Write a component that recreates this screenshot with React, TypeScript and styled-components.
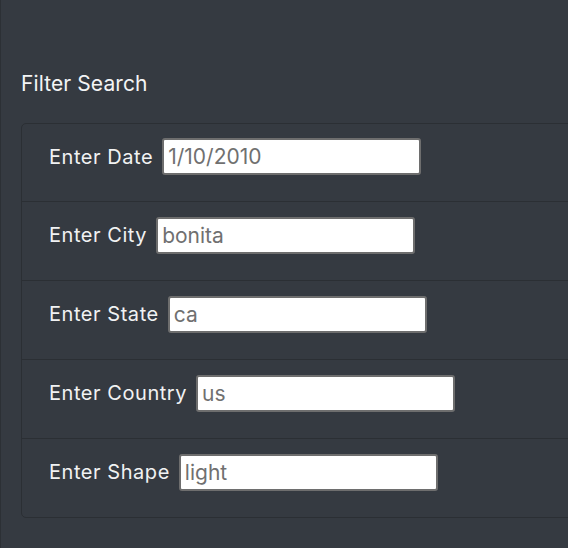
import React from "react";
import styled, { createGlobalStyle } from "styled-components";

const GlobalStyle = createGlobalStyle`
    html, body {
        margin: 0;
        padding: 0;
        background: #353a41;
    }
    body {
        font-family: Inter, "Open Sans", "Liberation Sans", sans-serif;
    }
`;

// Styled components
const Page = styled.div`
    min-height: 548px;
    box-sizing: border-box;
    border-left: 1px solid #2c3035;
    padding: 72px 0 0 20px;
    background: #353a41;
    overflow: hidden;
`;

const Title = styled.h5`
    margin: 0 0 27px;
    font-size: 21px;
    font-weight: 400;
    line-height: 24px;
    letter-spacing: 0.1px;
    color: #f3f4f5;
`;

const List = styled.ul`
    margin: 0;
    padding: 0;
    list-style: none;
    width: 700px;
    border: 1px solid #2b2f34;
    border-radius: 5px;
`;

const Item = styled.li`
    display: flex;
    align-items: center;
    gap: 9px;
    height: 79px;
    box-sizing: border-box;
    padding: 0 0 12px 27px;

    &:first-child {
        height: 77px;
    }

    & + & {
        border-top: 1px solid #2b2f34;
    }
`;

const Label = styled.label`
    font-size: 20px;
    letter-spacing: 0.55px;
    color: #f1f2f3;
    white-space: nowrap;
`;

const Input = styled.input`
    width: 259px;
    height: 37px;
    box-sizing: border-box;
    padding: 0 4px;
    border: 2px solid #6e6e6e;
    border-radius: 3px;
    background: #ffffff;
    font-family: inherit;
    font-size: 21px;
    color: #707070;
    outline: none;

    &::placeholder {
        color: #707070;
    }
`;

interface Field {
    id: string;
    label: string;
    placeholder: string;
}

const fields: Field[] = [
    { id: "datetime", label: "Enter Date", placeholder: "1/10/2010" },
    { id: "city", label: "Enter City", placeholder: "bonita" },
    { id: "state", label: "Enter State", placeholder: "ca" },
    { id: "country", label: "Enter Country", placeholder: "us" },
    { id: "shape", label: "Enter Shape", placeholder: "light" },
];

const App: React.FC = () => {
    return (
        <>
            <GlobalStyle />
            <Page>
                <Title>Filter Search</Title>
                <List>
                    {fields.map((f) => (
                        <Item key={f.id}>
                            <Label htmlFor={f.id}>{f.label}</Label>
                            <Input id={f.id} type="text" placeholder={f.placeholder} />
                        </Item>
                    ))}
                </List>
            </Page>
        </>
    );
};

export default App;
